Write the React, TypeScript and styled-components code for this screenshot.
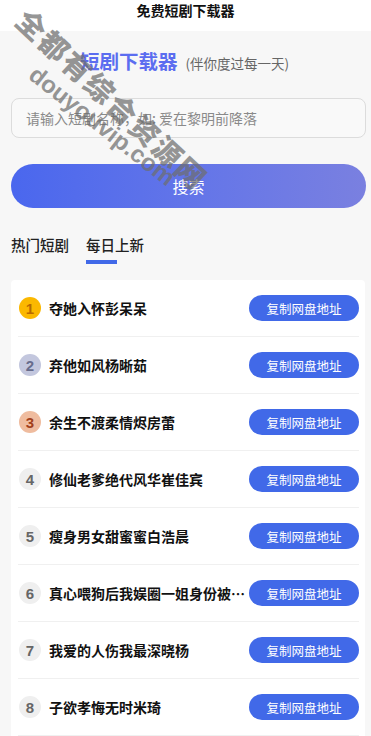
import styled, { createGlobalStyle } from "styled-components"

const GlobalStyle = createGlobalStyle`
  * { box-sizing: border-box; }
  body {
    margin: 0;
    background: #f7f7f7;
    font-family: "Noto Sans CJK SC", "Noto Sans", sans-serif;
  }
`

const dramas = [
  "夺她入怀彭呆呆",
  "弃他如风杨晰茹",
  "余生不渡柔情烬房蕾",
  "修仙老爹绝代风华崔佳宾",
  "瘦身男女甜蜜蜜白浩晨",
  "真心喂狗后我娱圈一姐身份被曝光了",
  "我爱的人伤我最深晓杨",
  "子欲孝悔无时米琦",
  "重生之千金归来林小鹿",
]

const rankColors = [
  { bg: "#fbb800", fg: "#b96a00" },
  { bg: "#c3c7de", fg: "#676c8c" },
  { bg: "#efbc9f", fg: "#a2401b" },
]

const App = () => {
  return (
    <Page>
      <GlobalStyle />
      <Header>免费短剧下载器</Header>
      <Main>
        <Brand>
          <BrandName>短剧下载器</BrandName>
          <BrandSub>(伴你度过每一天)</BrandSub>
        </Brand>
        <SearchInput placeholder="请输入短剧名称，如: 爱在黎明前降落" />
        <SearchButton>搜索</SearchButton>
        <Tabs>
          <Tab>热门短剧</Tab>
          <Tab $active>每日上新</Tab>
        </Tabs>
        <Card>
          {dramas.map((name, i) => {
            const c = rankColors[i] || { bg: "#efefef", fg: "#666666" }
            return (
              <Row key={i}>
                <Rank $bg={c.bg} $fg={c.fg}>
                  {i + 1}
                </Rank>
                <Title>{name}</Title>
                <CopyButton>复制网盘地址</CopyButton>
              </Row>
            )
          })}
        </Card>
      </Main>
      <Watermark>
        <MarkCn>全都有综合资源网</MarkCn>
        <MarkEn>douyouvip.com</MarkEn>
      </Watermark>
    </Page>
  )
}

const Page = styled.div`
  position: relative;
  min-height: 736px;
  overflow: hidden;
`
const Header = styled.div`
  height: 31px;
  padding-bottom: 10px;
  background: #fff;
  text-align: center;
  font-size: 14px;
  line-height: 21px;
  font-weight: 700;
  color: #111;
`
const Main = styled.div`
  display: flex;
  flex-direction: column;
  padding: 0 5px 0 11px;
`
const Brand = styled.div`
  display: flex;
  justify-content: center;
  align-items: baseline;
  gap: 8px;
  margin-top: 15px;
  height: 26px;
  padding-right: 8px;
`
const BrandName = styled.span`
  font-size: 19.5px;
  font-weight: 700;
  color: #5b6df0;
`
const BrandSub = styled.span`
  font-size: 13.5px;
  color: #666;
`
const SearchInput = styled.input`
  margin-top: 26px;
  height: 40px;
  width: 100%;
  padding: 0 14px;
  border: 1px solid #dcdcdc;
  border-radius: 8px;
  background: #f9f9f9;
  font-family: inherit;
  font-size: 14px;
  outline: none;
  &::placeholder {
    color: #8a8a8a;
  }
`
const SearchButton = styled.button`
  margin-top: 26px;
  height: 44px;
  width: 100%;
  border: none;
  border-radius: 22px;
  background: linear-gradient(90deg, #4a67ee 0%, #6576e8 55%, #7a80e0 100%);
  color: #fff;
  font-family: inherit;
  font-size: 16px;
`
const Tabs = styled.div`
  display: flex;
  gap: 17px;
  margin-top: 27px;
  height: 30px;
`
const Tab = styled.div<{ $active?: boolean }>`
  position: relative;
  font-size: 14.5px;
  line-height: 20px;
  font-weight: 500;
  color: #222;
  &::after {
    content: "";
    display: ${(p) => (p.$active ? "block" : "none")};
    position: absolute;
    left: 0;
    top: 25px;
    width: 31px;
    height: 4px;
    background: #4169e8;
  }
`
const Card = styled.div`
  margin-top: 15px;
  background: #fff;
  border-radius: 4px;
  padding: 0 6px 0 7px;
  margin-right: 1px;
`
const Row = styled.div`
  display: flex;
  align-items: center;
  height: 57px;
  border-bottom: 1px solid #f0f0f0;
`
const Rank = styled.div<{ $bg: string; $fg: string }>`
  flex-shrink: 0;
  width: 22px;
  height: 22px;
  margin-left: 1px;
  border-radius: 50%;
  background: ${(p) => p.$bg};
  color: ${(p) => p.$fg};
  font-family: "Liberation Sans", Arial, sans-serif;
  font-size: 15px;
  font-weight: 700;
  display: flex;
  align-items: center;
  justify-content: center;
`
const Title = styled.div`
  flex: 1;
  min-width: 0;
  margin-left: 8px;
  font-size: 14px;
  font-weight: 600;
  color: #111;
  white-space: nowrap;
  overflow: hidden;
  text-overflow: ellipsis;
`
const CopyButton = styled.button`
  flex-shrink: 0;
  width: 110px;
  height: 26px;
  margin-left: 2px;
  border: none;
  border-radius: 13px;
  background: #4169e8;
  color: #fff;
  font-family: inherit;
  font-size: 12.5px;
  padding: 0;
`
const Watermark = styled.div`
  position: absolute;
  left: 0;
  top: 0;
  width: 260px;
  height: 220px;
  pointer-events: none;
`
const MarkCn = styled.div`
  position: absolute;
  left: 113px;
  top: 98px;
  transform: translate(-50%, -50%) rotate(43deg);
  white-space: nowrap;
  font-size: 29px;
  font-weight: 900;
  letter-spacing: 2px;
  color: rgba(110, 110, 110, 0.72);
`
const MarkEn = styled.div`
  position: absolute;
  left: 102px;
  top: 126px;
  transform: translate(-50%, -50%) rotate(38deg);
  white-space: nowrap;
  font-family: "Liberation Sans", Arial, sans-serif;
  font-size: 24px;
  font-weight: 700;
  color: rgba(110, 110, 110, 0.72);
`

export default App
